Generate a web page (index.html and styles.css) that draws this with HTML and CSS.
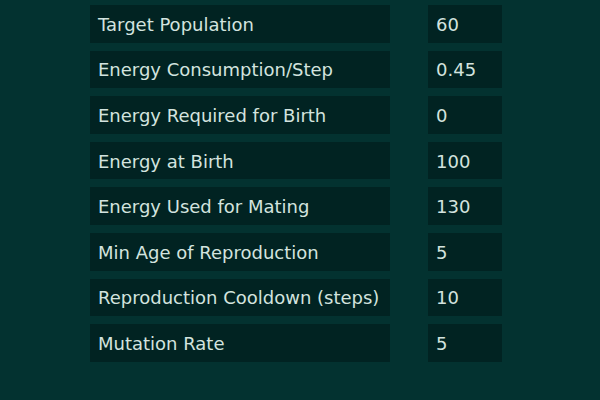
FILE: index.html
```html
<!DOCTYPE html>
<html>
<head>
<meta charset="utf-8">
<link rel="stylesheet" href="styles.css">
</head>
<body>
<div class="params">
  <div class="row"><div class="label">Target Population</div><div class="value">60</div></div>
  <div class="row"><div class="label">Energy Consumption/Step</div><div class="value">0.45</div></div>
  <div class="row"><div class="label">Energy Required for Birth</div><div class="value">0</div></div>
  <div class="row"><div class="label">Energy at Birth</div><div class="value">100</div></div>
  <div class="row"><div class="label">Energy Used for Mating</div><div class="value">130</div></div>
  <div class="row"><div class="label">Min Age of Reproduction</div><div class="value">5</div></div>
  <div class="row"><div class="label">Reproduction Cooldown (steps)</div><div class="value">10</div></div>
  <div class="row"><div class="label">Mutation Rate</div><div class="value">5</div></div>
</div>
</body>
</html>
```
FILE: styles.css
```css
html, body {
  margin: 0;
  padding: 0;
  background: #033230;
  width: 600px;
  height: 400px;
  overflow: hidden;
}
body {
  font-family: "DejaVu Sans", sans-serif;
  font-size: 18px;
  color: #d3e3df;
}
.params {
  display: flex;
  flex-direction: column;
  gap: 8px;
  padding: 5px 0 0 90px;
}
.row {
  display: flex;
  gap: 38px;
  height: 37.6px;
}
.label, .value {
  background: #012322;
  display: flex;
  align-items: center;
  padding: 1px 8px 0;
  box-sizing: border-box;
}
.label { width: 300px; }
.value { width: 74px; }
```
